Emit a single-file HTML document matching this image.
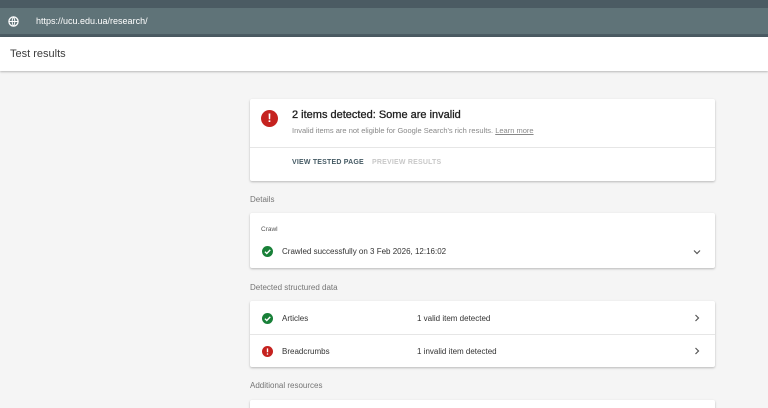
<!DOCTYPE html><html><head><style>
*{margin:0;padding:0;box-sizing:border-box}
html,body{width:768px;height:408px;overflow:hidden}
body{background:#f5f5f5;font-family:"Liberation Sans",sans-serif;color:#212121;position:relative}
.top{position:absolute;left:0;top:0;width:768px;height:8px;background:#4b5b63}
.bar{position:absolute;left:0;top:8px;width:768px;height:26px;background:#5f7378}
.bar2{position:absolute;left:0;top:34px;width:768px;height:3px;background:#4b5b63}
.url{position:absolute;left:36px;top:16px;font-size:9px;color:#fff}
.hdr{position:absolute;left:0;top:37px;width:768px;height:34px;background:#fff;box-shadow:0 1px 2px rgba(0,0,0,.25)}
.hdr span{position:absolute;left:10px;top:11px;font-size:11px;color:#333;font-weight:bold;-webkit-text-stroke:0}
.card{position:absolute;left:250px;width:465px;background:#fff;box-shadow:0 1px 2px rgba(0,0,0,.25);border-radius:2px}
.lbl{position:absolute;left:250px;font-size:8px;color:#757575}
.t{position:absolute;font-size:8px;color:#333}
.ic{position:absolute;width:11px;height:11px}
.ch{position:absolute}
</style></head><body>
<div class="top"></div><div class="bar"></div><div class="bar2"></div>
<svg style="position:absolute;left:8px;top:16px" width="11" height="11" viewBox="0 0 12 12"><circle cx="6" cy="6" r="5" fill="none" stroke="#fff" stroke-width="1.4"/><path d="M1 6h10M6 1c-2 3-2 7 0 10M6 1c2 3 2 7 0 10" stroke="#fff" fill="none" stroke-width="1"/></svg>
<div class="url">https://ucu.edu.ua/research/</div>
<div class="hdr"><span style="font-weight:normal;color:#3c3c3c">Test results</span></div>
<div class="card" style="top:99px;height:82px">
<div style="position:absolute;left:11px;top:11px;width:17px;height:17px;border-radius:50%;background:#c5221f;color:#fff;font-weight:bold;font-size:12px;text-align:center;line-height:17px">!</div>
<div class="t" style="left:42px;top:10px;font-size:11px;color:#212121;-webkit-text-stroke:0.3px #212121">2 items detected: Some are invalid</div>
<div class="t" style="left:42px;top:27px;font-size:7.5px;color:#888">Invalid items are not eligible for Google Search's rich results. <u>Learn more</u></div>
<div style="position:absolute;left:0;top:48px;width:100%;height:1px;background:#e6e6e6"></div>
<div class="t" style="left:42px;top:60px;font-size:7px;font-weight:bold;color:#455a64;letter-spacing:.2px">VIEW TESTED PAGE</div>
<div class="t" style="left:122px;top:60px;font-size:7px;font-weight:bold;color:#c8c8c8;letter-spacing:.2px">PREVIEW RESULTS</div>
</div>
<div class="lbl" style="top:195px">Details</div>
<div class="card" style="top:213px;height:55px">
<div class="t" style="left:11px;top:13px;font-size:6.5px;color:#555">Crawl</div>
<svg class="ic" style="left:12px;top:33px" viewBox="0 0 12 12"><circle cx="6" cy="6" r="6" fill="#188038"/><path d="M3.2 6.2l2 2 3.8-4" stroke="#fff" stroke-width="1.5" fill="none"/></svg>
<div class="t" style="left:32px;top:34px">Crawled successfully on 3 Feb 2026, 12:16:02</div>
<svg class="ch" style="left:443px;top:36px" width="8" height="6" viewBox="0 0 8 6"><path d="M1 1.5l3 3 3-3" stroke="#555" stroke-width="1.2" fill="none"/></svg>
</div>
<div class="lbl" style="top:283px">Detected structured data</div>
<div class="card" style="top:301px;height:66px">
<svg class="ic" style="left:12px;top:12px" viewBox="0 0 12 12"><circle cx="6" cy="6" r="6" fill="#188038"/><path d="M3.2 6.2l2 2 3.8-4" stroke="#fff" stroke-width="1.5" fill="none"/></svg>
<div class="t" style="left:32px;top:13px">Articles</div>
<div class="t" style="left:167px;top:13px">1 valid item detected</div>
<svg class="ch" style="left:444px;top:13px" width="6" height="8" viewBox="0 0 6 8"><path d="M1.5 1l3 3-3 3" stroke="#555" stroke-width="1.2" fill="none"/></svg>
<div style="position:absolute;left:0;top:33px;width:100%;height:1px;background:#e6e6e6"></div>
<svg class="ic" style="left:12px;top:45px" viewBox="0 0 12 12"><circle cx="6" cy="6" r="6" fill="#c5221f"/><path d="M6 2.6v4.2" stroke="#fff" stroke-width="1.5"/><circle cx="6" cy="8.7" r=".85" fill="#fff"/></svg>
<div class="t" style="left:32px;top:46px">Breadcrumbs</div>
<div class="t" style="left:167px;top:46px">1 invalid item detected</div>
<svg class="ch" style="left:444px;top:46px" width="6" height="8" viewBox="0 0 6 8"><path d="M1.5 1l3 3-3 3" stroke="#555" stroke-width="1.2" fill="none"/></svg>
</div>
<div class="lbl" style="top:381px">Additional resources</div>
<div class="card" style="top:400px;height:20px"></div>
</body></html>
